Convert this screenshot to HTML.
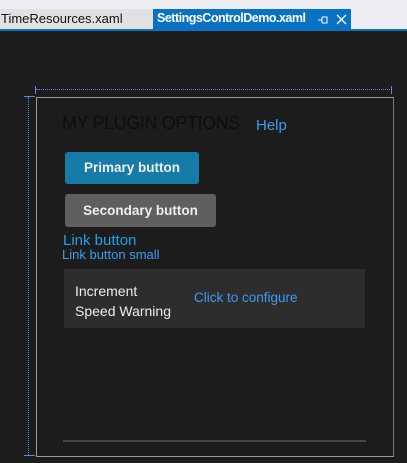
<!DOCTYPE html>
<html><head><style>
*{margin:0;padding:0;box-sizing:border-box}
body{width:407px;height:463px;overflow:hidden;background:#1c1c1c;font-family:"Liberation Sans",sans-serif;position:relative}
.a{position:absolute;white-space:nowrap}
</style></head><body>
<div class="a" style="left:0;top:0;width:407px;height:9px;background:#eeeef2"></div>
<div class="a" style="left:0;top:9px;width:153px;height:20px;background:#e1e1e3"></div>
<div class="a" style="left:1px;top:11px;font-size:13px;color:#111">TimeResources.xaml</div>
<div class="a" style="left:153px;top:9px;width:198px;height:20px;background:#0a72c4"></div>
<div class="a" style="left:351px;top:9px;width:56px;height:20px;background:#eeeef2"></div>
<div class="a" style="left:157px;top:11px;font-size:12.5px;color:#fff;font-weight:bold;letter-spacing:-0.5px">SettingsControlDemo.xaml</div>
<svg class="a" style="left:315px;top:13px" width="40" height="14"><path d="M3 7H7M7 4V10M7 4H12V10H7" stroke="#fff" fill="none"/><path d="M22 2L31 11M31 2L22 11" stroke="#fff" stroke-width="1.3"/></svg>
<div class="a" style="left:0;top:29px;width:407px;height:2px;background:#0a72c4"></div>

<div class="a" style="left:36px;top:89px;width:356px;border-top:1px dotted #6a8ad8"></div>
<div class="a" style="left:35px;top:86px;width:1px;height:8px;background:#5a8ae0"></div>
<div class="a" style="left:391px;top:86px;width:1px;height:8px;background:#5a8ae0"></div>
<div class="a" style="left:28px;top:97px;height:358px;border-left:1px dotted #5a8ae0"></div>
<div class="a" style="left:24px;top:96px;width:11px;height:1px;background:#5a8ae0"></div>
<div class="a" style="left:24px;top:455px;width:11px;height:1px;background:#5a8ae0"></div>
<div class="a" style="left:36px;top:97px;width:358px;height:360px;border:1px solid #9a9a9a;border-right:1px solid #777"></div>

<div class="a" style="left:62px;top:113px;font-size:18px;letter-spacing:-0.4px;color:#0d0d0d">MY PLUGIN OPTIONS</div>
<div class="a" style="left:256px;top:117px;font-size:15px;color:#3d9bf0">Help</div>

<div class="a" style="left:65px;top:152px;width:134px;height:32px;background:#177ba8;border-radius:3px;color:#eee;font-weight:bold;font-size:13.5px;line-height:32px;text-align:center">Primary button</div>
<div class="a" style="left:65px;top:194px;width:151px;height:33px;background:#5f5f5f;border-radius:3px;color:#eee;font-weight:bold;font-size:13.5px;line-height:33px;text-align:center">Secondary button</div>
<div class="a" style="left:63px;top:232px;font-size:15px;color:#1fa0e8">Link button</div>
<div class="a" style="left:62px;top:247px;font-size:13px;color:#3d9bf0">Link button small</div>

<div class="a" style="left:64px;top:269px;width:301px;height:59px;background:#2d2d2d"></div>
<div class="a" style="left:75px;top:281px;font-size:14px;color:#eee;line-height:20px">Increment<br>Speed Warning</div>
<div class="a" style="left:194px;top:290px;font-size:13.5px;color:#3d9bf0">Click to configure</div>

<div class="a" style="left:63px;top:440px;width:303px;height:2px;background:#464646"></div>
</body></html>
